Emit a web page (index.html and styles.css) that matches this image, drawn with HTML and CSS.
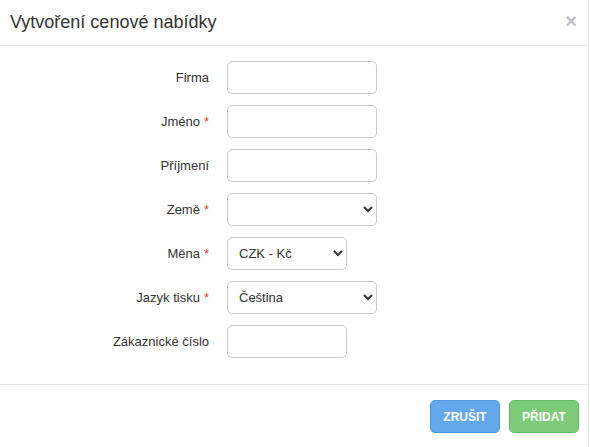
FILE: index.html
```html
<!DOCTYPE html>
<html lang="cs">
<head>
<meta charset="utf-8">
<link rel="stylesheet" href="styles.css">
</head>
<body>
<div class="modal">
  <div class="modal-header">
    <h4 class="modal-title">Vytvoření cenové nabídky</h4>
    <button class="close" type="button">×</button>
  </div>
  <div class="modal-body">
    <form class="form">
      <label class="lbl">Firma</label>
      <div class="ctl"><input class="input w150" type="text"></div>
      <label class="lbl">Jméno <span class="req">*</span></label>
      <div class="ctl"><input class="input w150" type="text"></div>
      <label class="lbl">Příjmení</label>
      <div class="ctl"><input class="input w150" type="text"></div>
      <label class="lbl">Země <span class="req">*</span></label>
      <div class="ctl"><select class="input sel w150"><option></option></select></div>
      <label class="lbl">Měna <span class="req">*</span></label>
      <div class="ctl"><select class="input sel w120"><option>CZK - Kč</option></select></div>
      <label class="lbl">Jazyk tisku <span class="req">*</span></label>
      <div class="ctl"><select class="input sel w150"><option>Čeština</option></select></div>
      <label class="lbl">Zákaznické číslo</label>
      <div class="ctl"><input class="input w120" type="text"></div>
    </form>
  </div>
  <div class="modal-footer">
    <button class="btn btn-blue" type="button">Zrušit</button>
    <button class="btn btn-green" type="button">Přidat</button>
  </div>
</div>
</body>
</html>
```

FILE: styles.css
```css
* { box-sizing: border-box; }
html, body { margin: 0; padding: 0; background: #fff; }
body {
  font-family: "Liberation Sans", Arial, sans-serif;
  color: #333;
}
.modal {
  width: 589px;
  height: 447px;
  border-right: 1px solid #eee;
}
.modal-header {
  height: 46px;
  border-bottom: 1px solid #e5e5e5;
  display: flex;
  align-items: center;
  justify-content: space-between;
  padding: 0 10px 0 10px;
}
.modal-title {
  margin: 0;
  font-size: 18px;
  font-weight: 400;
  color: #333;
  line-height: 1;
  padding-bottom: 2px;
}
.close {
  border: 0;
  background: none;
  padding: 0;
  font-size: 20px;
  font-weight: 700;
  color: #c0c0c0;
  line-height: 1;
  font-family: "Liberation Sans", Arial, sans-serif;
  margin-right: 1px;
  margin-bottom: 3px;
}
.modal-body {
  padding: 15px 0 26px 0;
}
.form {
  display: grid;
  grid-template-columns: 209px 1fr;
  column-gap: 18px;
  row-gap: 11px;
  margin: 0;
}
.lbl {
  font-size: 13px;
  color: #333;
  text-align: right;
  display: flex;
  align-items: center;
  justify-content: flex-end;
  gap: 4px;
  height: 33px;
}
.req { color: #e53935; }
.ctl { display: flex; align-items: center; }
.input {
  height: 33px;
  border: 1px solid #ccc;
  border-radius: 5px;
  background: #fff;
  font-family: "Liberation Sans", Arial, sans-serif;
  font-size: 13px;
  color: #333;
  padding: 0 6px 0 10px;
  margin: 0;
}
.sel { padding-left: 7px; }
.w150 { width: 150px; }
.w120 { width: 120px; }
.modal-footer {
  border-top: 1px solid #e5e5e5;
  display: flex;
  justify-content: flex-end;
  gap: 9px;
  padding: 15px 9px 0 0;
}
.btn {
  width: 70px;
  height: 33px;
  border-radius: 5px;
  color: #fff;
  font-family: "Liberation Sans", Arial, sans-serif;
  font-weight: 700;
  font-size: 12px;
  text-transform: uppercase;
  padding: 0;
}
.btn-blue { background: #62a8ea; border: 1px solid #4f97dd; }
.btn-green { background: #7dcb78; border: 1px solid #68b964; }
```
